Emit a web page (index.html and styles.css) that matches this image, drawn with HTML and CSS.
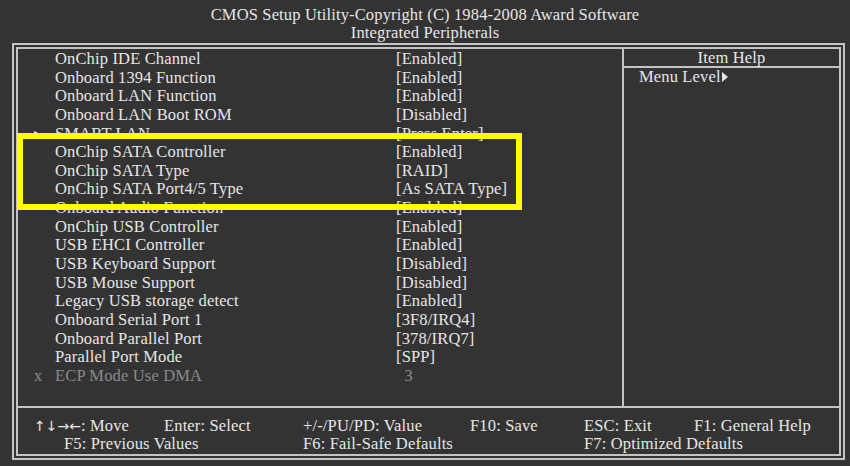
FILE: index.html
```html
<!DOCTYPE html>
<html lang="en">
<head>
  <meta charset="UTF-8" />
  <title>Integrated Peripherals</title>
  <link rel="stylesheet" href="styles.css">
</head>
<body>
  <div id="screen">
    <div id="title">
      <div>CMOS Setup Utility-Copyright (C) 1984-2008 Award Software</div>
      <div>Integrated Peripherals</div>
    </div>

    <div id="frame">
      <div id="panel">
        <div id="main">
          <div id="items">
            <div class="row"><span class="mark"></span><span class="label">OnChip IDE Channel</span><span class="value">[Enabled]</span></div>
            <div class="row"><span class="mark"></span><span class="label">Onboard 1394 Function</span><span class="value">[Enabled]</span></div>
            <div class="row"><span class="mark"></span><span class="label">Onboard LAN Function</span><span class="value">[Enabled]</span></div>
            <div class="row"><span class="mark"></span><span class="label">Onboard LAN Boot ROM</span><span class="value">[Disabled]</span></div>
            <div class="row"><span class="mark">&#9654;</span><span class="label">SMART LAN</span><span class="value">[Press Enter]</span></div>
            <div class="row"><span class="mark"></span><span class="label">OnChip SATA Controller</span><span class="value">[Enabled]</span></div>
            <div class="row"><span class="mark"></span><span class="label">OnChip SATA Type</span><span class="value">[RAID]</span></div>
            <div class="row"><span class="mark"></span><span class="label">OnChip SATA Port4/5 Type</span><span class="value">[As SATA Type]</span></div>
            <div class="row"><span class="mark"></span><span class="label">Onboard Audio Function</span><span class="value">[Enabled]</span></div>
            <div class="row"><span class="mark"></span><span class="label">OnChip USB Controller</span><span class="value">[Enabled]</span></div>
            <div class="row"><span class="mark"></span><span class="label">USB EHCI Controller</span><span class="value">[Enabled]</span></div>
            <div class="row"><span class="mark"></span><span class="label">USB Keyboard Support</span><span class="value">[Disabled]</span></div>
            <div class="row"><span class="mark"></span><span class="label">USB Mouse Support</span><span class="value">[Disabled]</span></div>
            <div class="row"><span class="mark"></span><span class="label">Legacy USB storage detect</span><span class="value">[Enabled]</span></div>
            <div class="row"><span class="mark"></span><span class="label">Onboard Serial Port 1</span><span class="value">[3F8/IRQ4]</span></div>
            <div class="row"><span class="mark"></span><span class="label">Onboard Parallel Port</span><span class="value">[378/IRQ7]</span></div>
            <div class="row"><span class="mark"></span><span class="label">Parallel Port Mode</span><span class="value">[SPP]</span></div>
            <div class="row disabled"><span class="mark">x</span><span class="label">ECP Mode Use DMA</span><span class="value">&nbsp;&nbsp;3</span></div>
          </div>
          <div id="help">
            <div class="help-head">Item Help</div>
            <div class="help-body">Menu Level<span class="tri"></span></div>
          </div>
        </div>

        <div id="keys">
          <div class="keyrow">
            <span class="k1"><span class="arrows">&#8593;&#8595;&#8594;&#8592;</span>: Move</span>
            <span class="k2">Enter: Select</span>
            <span class="k3">+/-/PU/PD: Value</span>
            <span class="k4">F10: Save</span>
            <span class="k5">ESC: Exit</span>
            <span class="k6">F1: General Help</span>
          </div>
          <div class="keyrow">
            <span class="k1 indent">F5: Previous Values</span>
            <span class="k2"></span>
            <span class="k3">F6: Fail-Safe Defaults</span>
            <span class="k4"></span>
            <span class="k5">F7: Optimized Defaults</span>
          </div>
        </div>
      </div>
      <div id="highlight"></div>
    </div>
  </div>
</body>
</html>
```

FILE: styles.css
```css
html, body {
  margin: 0;
  padding: 0;
  background: #333333;
}
body {
  width: 850px;
  height: 466px;
  overflow: hidden;
  font-family: "Liberation Serif", "Times New Roman", serif;
  font-size: 16.5px;
  letter-spacing: 0.15px;
  color: #e6e6e6;
}
#screen {
  padding-top: 6px;
}
#title {
  text-align: center;
  line-height: 18px;
  height: 37px;
}
#frame {
  position: relative;
  margin-left: 12px;
  width: 825px;
  height: 409px;
  border: 2px solid #c4c4c4;
  padding: 2px;
}
#panel {
  border: 2px solid #c4c4c4;
  height: 409px;
  display: flex;
  flex-direction: column;
  box-sizing: border-box;
}
#main {
  display: flex;
  height: 357px;
  border-bottom: 2px solid #c4c4c4;
}
#items {
  width: 604px;
  border-right: 2px solid #c4c4c4;
  padding-top: 1px;
}
.row {
  display: flex;
  height: 18.65px;
  line-height: 18.65px;
  white-space: nowrap;
}
.mark {
  width: 37px;
  padding-left: 16px;
  box-sizing: border-box;
  font-size: 11px;
}
.label {
  width: 341px;
}
.value {
  flex: 1;
}
.row.disabled {
  color: #8a8a8a;
}
.row.disabled .mark {
  font-size: 16.5px;
}
#help {
  flex: 1;
}
.help-head {
  text-align: center;
  height: 17px;
  line-height: 18px;
  border-bottom: 2px solid #c4c4c4;
}
.help-body {
  padding-left: 15px;
  line-height: 18px;
}
.tri {
  display: inline-block;
  width: 0;
  height: 0;
  margin-left: 1px;
  border-left: 6px solid #e6e6e6;
  border-top: 5px solid transparent;
  border-bottom: 5px solid transparent;
}
#keys {
  flex: 1;
  padding-top: 9px;
}
.keyrow {
  display: flex;
  line-height: 18px;
  white-space: nowrap;
}
.arrows {
  font-family: "DejaVu Sans", sans-serif;
  font-size: 14px;
  letter-spacing: 0;
}
.k1 { width: 130px; padding-left: 16px; }
.k1.indent { padding-left: 46px; width: 100px; }
.k2 { width: 139px; }
.k3 { width: 167px; }
.k4 { width: 114px; }
.k5 { width: 110px; }
#highlight {
  position: absolute;
  left: 3px;
  top: 88px;
  width: 493px;
  height: 65px;
  border: 6px solid #ffff00;
}
```
